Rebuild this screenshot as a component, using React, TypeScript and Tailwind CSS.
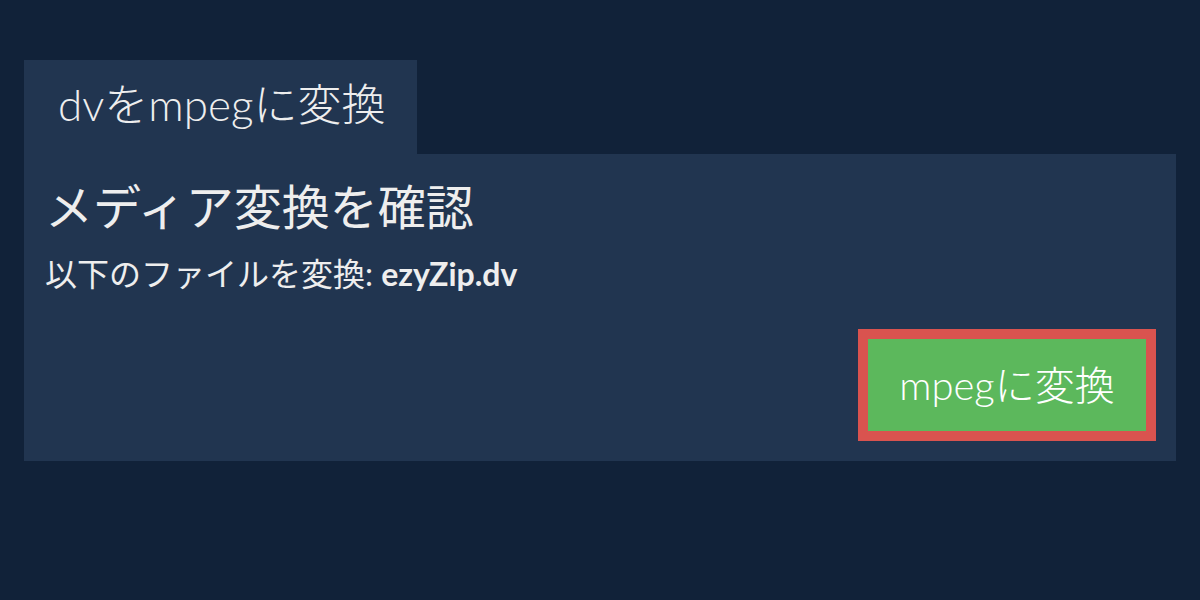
export default function App() {
  return (
    <div
      className="h-[600px] w-[1200px] bg-[#112239] pt-[60px] px-6 text-[#eeeeee]"
      style={{ fontFamily: 'Lato, "Noto Sans CJK JP", sans-serif' }}
    >
      {/* Tab */}
      <div className="flex h-[94px] w-[393px] items-center bg-[#213550] pl-[34px] pb-[6px]">
        <span className="text-[44px] font-light leading-none">dvをmpegに変換</span>
      </div>

      {/* Panel */}
      <div className="flex h-[307px] flex-col bg-[#213550] px-[21px] pt-[23px]">
        <h1 className="text-[48px] leading-[60px]">メディア変換を確認</h1>
        <p className="mt-[17px] text-[32px] leading-[40px]">
          以下のファイルを変換: <span className="font-bold">ezyZip.dv</span>
        </p>
        <div className="mt-[35px] flex justify-end">
          <button className="mr-[-1px] flex h-[112px] w-[298px] items-center justify-center border-[10px] border-[#d9534f] bg-[#5cb85c] text-[40px] font-light text-white">
            mpegに変換
          </button>
        </div>
      </div>
    </div>
  )
}
